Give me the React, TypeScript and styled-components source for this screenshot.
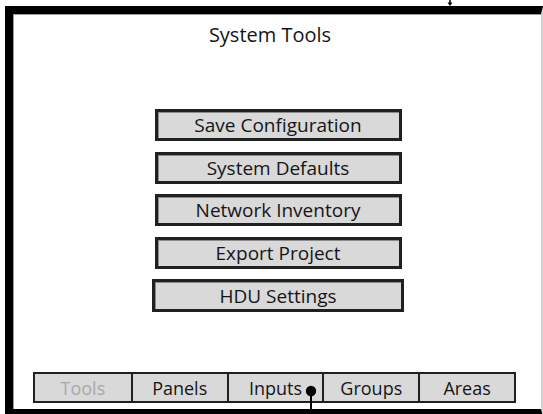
import React from 'react';
import styled, { createGlobalStyle } from 'styled-components';

const GlobalStyle = createGlobalStyle`
    html, body {
        margin: 0;
        padding: 0;
        background: #ffffff;
    }
    body {
        font-family: "Open Sans", "Noto Sans", sans-serif;
    }
`;

const Screen = styled.div`
    position: relative;
    width: 543px;
    height: 414px;
    overflow: hidden;
    background: #ffffff;
`;

const Pointer = styled.svg`
    position: absolute;
    left: 446px;
    top: 0;
`;

const Frame = styled.div`
    box-sizing: border-box;
    display: flex;
    flex-direction: column;
    margin: 6px 0 0 5px;
    width: 538px;
    height: 411px;
    border: 8px solid #000000;
    border-right: 2px solid #d2d2d2;
    box-shadow: inset 1px 1px 0 #9a9a9a;
    padding: 9px 0 0 0;
`;

const Title = styled.h1`
    margin: 0;
    padding-right: 14px;
    font-size: 20px;
    line-height: 24px;
    font-weight: 400;
    color: #151515;
    text-align: center;
`;

const ButtonList = styled.div`
    display: flex;
    flex-direction: column;
    align-items: center;
    gap: 10.5px;
    margin-top: 62px;
    padding-left: 2px;
`;

const ToolButton = styled.button<{ $wide?: boolean }>`
    box-sizing: border-box;
    width: ${({ $wide }) => ($wide ? '252px' : '247px')};
    height: ${({ $wide }) => ($wide ? '33px' : '32px')};
    margin: 0;
    padding: 0;
    border: 3px solid #202020;
    background: #d9d9d9;
    box-shadow: inset 1px 1px 0 #8a8a8a;
    font-family: "Open Sans", "Noto Sans", sans-serif;
    font-size: 19px;
    color: #151515;
    line-height: 24px;
`;

const TabBar = styled.div`
    position: relative;
    box-sizing: border-box;
    display: grid;
    grid-template-columns: repeat(5, 1fr);
    width: 483px;
    height: 31px;
    margin: auto 0 6px 20px;
    border: 2px solid #202020;
    background: #d9d9d9;
`;

const Tab = styled.div<{ $disabled?: boolean }>`
    display: flex;
    align-items: center;
    justify-content: center;
    font-size: 18px;
    color: ${({ $disabled }) => ($disabled ? '#a9a9a9' : '#151515')};
    & + & {
        border-left: 2px solid #202020;
    }
`;

const Marker = styled.svg`
    position: absolute;
    left: 270px;
    top: 11px;
`;

const tools = ['Save Configuration', 'System Defaults', 'Network Inventory', 'Export Project'];
const tabs = ['Tools', 'Panels', 'Inputs', 'Groups', 'Areas'];

export default function App() {
    return (
        <Screen>
            <GlobalStyle />
            <Pointer width="8" height="6" viewBox="0 0 8 6">
                <line x1="4" y1="0" x2="4" y2="3" stroke="#000" strokeWidth="1.5" />
                <path d="M1.5 2.5 L6.5 2.5 L4 6 Z" fill="#000" />
            </Pointer>
            <Frame>
                <Title>System Tools</Title>
                <ButtonList>
                    {tools.map((t) => (
                        <ToolButton key={t}>{t}</ToolButton>
                    ))}
                    <ToolButton $wide>HDU Settings</ToolButton>
                </ButtonList>
                <TabBar>
                    {tabs.map((t, i) => (
                        <Tab key={t} $disabled={i === 0}>{t}</Tab>
                    ))}
                    <Marker width="12" height="30" viewBox="0 0 12 30">
                        <circle cx="6" cy="6" r="5.2" fill="#000" />
                        <line x1="6" y1="6" x2="6" y2="30" stroke="#000" strokeWidth="2" />
                    </Marker>
                </TabBar>
            </Frame>
        </Screen>
    );
}
